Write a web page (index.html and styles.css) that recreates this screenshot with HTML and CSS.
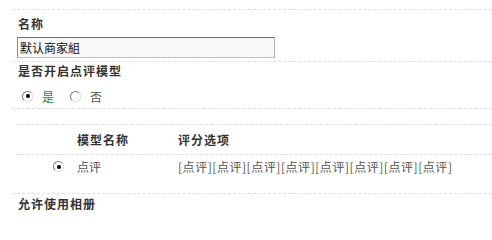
FILE: index.html
```html
<!DOCTYPE html>
<html lang="zh-CN">
<head>
<meta charset="utf-8">
<title>商家组</title>
<link rel="stylesheet" href="styles.css">
</head>
<body>
<div class="form">
  <div class="item item-name">
    <div class="label">名称</div>
    <input class="text-input" type="text" value="默认商家組">
  </div>
  <div class="item item-review">
    <div class="label">是否开启点评模型</div>
    <div class="choices">
      <label class="choice"><input class="radio" type="radio" name="open" checked><span class="yes">是</span></label>
      <label class="choice"><input class="radio" type="radio" name="open"><span class="no">否</span></label>
    </div>
  </div>
  <div class="item item-models">
    <div class="models">
      <div class="mrow mhead">
        <div class="mcell"></div>
        <div class="mcell">模型名称</div>
        <div class="mcell">评分选项</div>
      </div>
      <div class="mrow mdata">
        <div class="mcell cell-radio"><input class="radio" type="radio" name="model" checked></div>
        <div class="mcell">点评</div>
        <div class="mcell opts">[点评][点评][点评][点评][点评][点评][点评][点评]</div>
      </div>
    </div>
  </div>
  <div class="item item-album">
    <div class="label">允许使用相册</div>
  </div>
</div>
</body>
</html>
```
FILE: styles.css
```css
html, body {
  margin: 0;
  padding: 0;
  background: #fff;
}
body {
  font-family: "Noto Sans CJK SC", "Liberation Sans", sans-serif;
  font-size: 12px;
  color: #555;
}
.form {
  padding-top: 9px;
  padding-left: 12px;
}
.item {
  border-top: 1px dashed #dedede;
}
.label {
  font-weight: bold;
  color: #333;
  line-height: 14px;
  padding-left: 6px;
  letter-spacing: 1px;
}
.item-name .label {
  padding-top: 7px;
}
.text-input {
  display: block;
  box-sizing: border-box;
  width: 258px;
  height: 21px;
  margin: 6px 0 3px 5px;
  padding: 0 2px;
  border: 1px solid;
  border-color: #6f6f6f #b0b0b0 #c4c4c4 #8a8a8a;
  background: #f8f8f8;
  font-family: "Noto Sans CJK SC", sans-serif;
  font-size: 12px;
  color: #111;
  outline: none;
}
.item-review .label {
  padding-top: 2px;
}
.choices {
  display: flex;
  align-items: center;
  gap: 16px;
  margin-top: 8px;
  padding-left: 10px;
  height: 20px;
  padding-bottom: 2px;
}
.choice {
  display: flex;
  align-items: center;
  gap: 9px;
}
.yes { color: #1f8a1f; }
.no { color: #555; }
.radio {
  -webkit-appearance: none;
  appearance: none;
  margin: 0;
  width: 11px;
  height: 11px;
  box-sizing: border-box;
  border-radius: 50%;
  border: 1px solid;
  border-color: #7c7c7c #dcdcdc #dcdcdc #7c7c7c;
  background: #fff;
  position: relative;
}
.radio:checked::after {
  content: "";
  position: absolute;
  left: 2.5px;
  top: 2.5px;
  width: 4px;
  height: 4px;
  border-radius: 50%;
  background: #000;
}
.models {
  margin: 15px 0 0 4px;
  padding-bottom: 15px;
}
.mrow {
  display: grid;
  grid-template-columns: 61px 101px 1fr;
  align-items: center;
  border-top: 1px dashed #dedede;
}
.mhead {
  height: 29px;
  font-weight: bold;
  color: #333;
  letter-spacing: 1px;
}
.mdata {
  height: 23px;
}
.cell-radio {
  padding-left: 37px;
  display: flex;
  align-items: center;
}
.opts {
  white-space: nowrap;
  letter-spacing: 0.55px;
}
.item-album .label {
  padding-top: 3px;
  padding-bottom: 8px;
}
```
